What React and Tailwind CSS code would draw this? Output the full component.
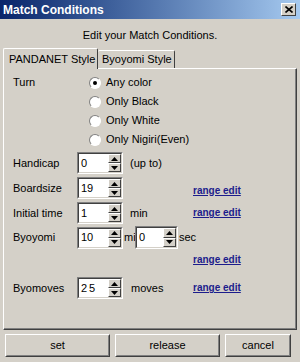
import { useState } from "react";

const Arrow = ({ up }) => (
  <svg width="7" height="4" viewBox="0 0 7 4" className="block">
    <path d={up ? "M3.5 0 L7 4 L0 4 Z" : "M0 0 L7 0 L3.5 4 Z"} fill="#000" />
  </svg>
);

const SpinBtn = ({ up }) => (
  <div className="flex-1 flex items-center justify-center bg-[#d4d0c8] border-t border-l border-t-white border-l-white border-r border-b border-r-[#404040] border-b-[#404040]">
    <Arrow up={up} />
  </div>
);

const Spinner = ({ value, w = "w-[46px]", h = "h-[22px]", spaced }) => (
  <div
    className={`${w} ${h} flex border border-t-[#808080] border-l-[#808080] border-r-white border-b-white shrink-0 relative z-10`}
  >
    <div className="flex-1 flex bg-white border border-t-[#404040] border-l-[#404040] border-r-[#d4d0c8] border-b-[#d4d0c8]">
      <div className={`flex-1 pl-[2px] flex items-center text-[11px] ${spaced ? "tracking-[2px]" : ""}`}>
        {value}
      </div>
      <div className="w-[13px] flex flex-col">
        <SpinBtn up />
        <SpinBtn />
      </div>
    </div>
  </div>
);

const RangeEdit = () => (
  <span className="text-[10px] font-bold underline text-[#1c1c8c] leading-none">range edit</span>
);

const Radio = ({ checked, label }) => (
  <div className="h-[19px] flex items-center">
    <div className="w-[12px] h-[12px] rounded-full bg-white border border-t-[#808080] border-l-[#808080] border-r-white border-b-white flex items-center justify-center">
      {checked && <div className="w-[4px] h-[4px] rounded-full bg-black" />}
    </div>
    <span className="ml-[5px]">{label}</span>
  </div>
);

const WinButton = ({ label, w }) => (
  <div className={`${w} h-[23px] border border-t-white border-l-white border-r-[#404040] border-b-[#404040]`}>
    <div className="w-full h-full flex items-center justify-center border border-t-[#d4d0c8] border-l-[#d4d0c8] border-r-[#808080] border-b-[#808080]">
      {label}
    </div>
  </div>
);

export default function App() {
  const [turn] = useState("any");

  return (
    <div
      className="w-[300px] h-[362px] bg-[#d4d0c8] text-[11px] text-black flex flex-col overflow-hidden"
      style={{ fontFamily: "Tahoma, 'Liberation Sans', Arial, sans-serif" }}
    >
      {/* title bar */}
      <div className="h-[19px] shrink-0 flex items-center justify-between pl-[3px] pr-[4px] bg-gradient-to-r from-[#0a246a] to-[#a6caf0]">
        <span className="text-white font-bold text-[12px]">Match Conditions</span>
        <div className="w-[15px] h-[13px] bg-[#d4d0c8] border border-t-white border-l-white border-r-[#404040] border-b-[#404040] flex items-center justify-center">
          <svg width="8" height="7" viewBox="0 0 8 7">
            <path d="M0.5 0.5 L7.5 6.5 M7.5 0.5 L0.5 6.5" stroke="#000" strokeWidth="1.6" />
          </svg>
        </div>
      </div>

      <div className="h-[29px] shrink-0 flex items-center justify-center pt-[3px]">
        Edit your Match Conditions.
      </div>

      {/* tabs */}
      <div className="h-[20px] shrink-0 flex items-end pl-[3px] relative z-10">
        <div className="h-[21px] w-[95px] bg-[#d4d0c8] border-t border-l border-r border-t-white border-l-white border-r-[#404040] rounded-t-[2px] flex items-center pl-[5px] mb-[-1px]">
          PANDANET Style
        </div>
        <div className="h-[18px] w-[77px] border-t border-r border-t-white border-r-[#404040] rounded-t-[2px] flex items-center pl-[4px]">
          Byoyomi Style
        </div>
      </div>

      {/* panel */}
      <div className="h-[262px] shrink-0 mx-[3px] border border-t-white border-l-white border-r-[#404040] border-b-[#404040]">
        <div className="h-full border-r border-b border-r-[#808080] border-b-[#808080] pl-[9px] pt-[4px] flex flex-col">
          <div className="flex">
            <div className="w-[76px] h-[19px] flex items-center">Turn</div>
            <div className="flex flex-col">
              {[
                ["any", "Any color"],
                ["black", "Only Black"],
                ["white", "Only White"],
                ["nigiri", "Only Nigiri(Even)"],
              ].map(([k, l]) => (
                <Radio key={k} checked={turn === k} label={l} />
              ))}
            </div>
          </div>

          <div className="flex items-center mt-[3px]">
            <div className="w-[64px]">Handicap</div>
            <Spinner value="0" />
            <span className="ml-[7px]">(up to)</span>
          </div>

          <div className="flex items-center mt-[3px]">
            <div className="w-[64px]">Boardsize</div>
            <Spinner value="19" />
            <span className="ml-[70px] self-end mb-[1px]"><RangeEdit /></span>
          </div>

          <div className="flex items-center mt-[3px]">
            <div className="w-[64px]">Initial time</div>
            <Spinner value="1" />
            <span className="ml-[7px] w-[63px]">min</span>
            <RangeEdit />
          </div>

          <div className="flex items-center mt-[2px]">
            <div className="w-[64px]">Byoyomi</div>
            <Spinner value="10" />
            <span className="ml-[1px] w-[11px] whitespace-nowrap">min</span>
            <Spinner value="0" w="w-[43px]" h="h-[23px]" />
            <span className="ml-[1px]">sec</span>
          </div>

          <div className="flex h-[21px] items-center pl-[180px]">
            <RangeEdit />
          </div>

          <div className="flex items-center mt-[7px]">
            <div className="w-[64px]">Byomoves</div>
            <Spinner value="25" spaced />
            <span className="ml-[8px] w-[62px]">moves</span>
            <RangeEdit />
          </div>
        </div>
      </div>

      {/* buttons */}
      <div className="flex pl-[5px] mt-[4px] gap-[5px]">
        <WinButton label="set" w="w-[105px]" />
        <WinButton label="release" w="w-[105px]" />
        <WinButton label="cancel" w="w-[66px]" />
      </div>
    </div>
  );
}
